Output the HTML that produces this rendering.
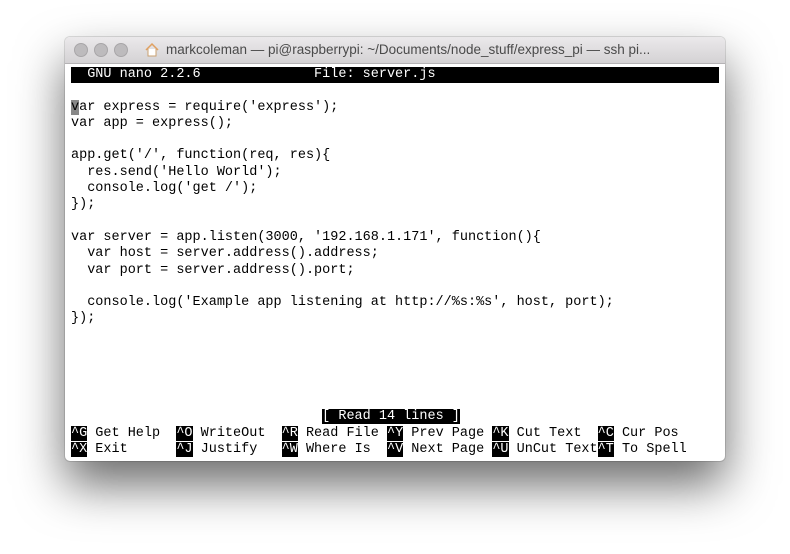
<!DOCTYPE html>
<html><head><style>
html,body{margin:0;padding:0;width:790px;height:554px;background:#fff;overflow:hidden}
.win{position:absolute;left:65px;top:37px;width:660px;height:424px;background:#fff;border-radius:5px;box-shadow:0 24px 48px rgba(0,0,0,.58),0 0 0 1px rgba(0,0,0,.12);overflow:hidden}
.tb{height:26px;background:linear-gradient(#ebe9eb,#d4d2d4);border-bottom:1px solid #b5b3b5;position:relative;font:13.5px "Liberation Sans",sans-serif;color:#4a4a4a}
.dot{position:absolute;top:6px;width:12px;height:12px;border-radius:50%;background:#bdbbbd;border:0.5px solid #a8a6a8}
.title{position:absolute;left:101px;top:5px;white-space:nowrap}
.term{position:absolute;left:6px;top:30px;font:13.5px/16.3px "Liberation Mono",monospace;color:#000;white-space:pre}
.r{height:16.3px;width:648px}
.inv{background:#000;color:#fff}
.k{background:#000;color:#fff}
</style></head><body>
<div class="win">
<div class="tb">
<div class="dot" style="left:9px"></div>
<div class="dot" style="left:29px"></div>
<div class="dot" style="left:49px"></div>
<svg style="position:absolute;left:79px;top:5px" width="16" height="15" viewBox="0 0 16 15"><path d="M2 8 L8 2 L14 8" fill="none" stroke="#e0a060" stroke-width="1.5"/><path d="M4 7 V14 H12 V7" fill="#fff" stroke="#c9a070"/></svg>
<div class="title">markcoleman — pi@raspberrypi: ~/Documents/node_stuff/express_pi — ssh pi...</div>
</div>
<div class="term"><div class="r inv">  GNU nano 2.2.6              File: server.js                                   </div><div class="r"></div><div class="r"><span style="background:#888">v</span>ar express = require('express');</div><div class="r">var app = express();</div><div class="r"></div><div class="r">app.get('/', function(req, res){</div><div class="r">  res.send('Hello World');</div><div class="r">  console.log('get /');</div><div class="r">});</div><div class="r"></div><div class="r">var server = app.listen(3000, '192.168.1.171', function(){</div><div class="r">  var host = server.address().address;</div><div class="r">  var port = server.address().port;</div><div class="r"></div><div class="r">  console.log('Example app listening at http://%s:%s', host, port);</div><div class="r">});</div><div class="r"></div><div class="r"></div><div class="r"></div><div class="r"></div><div class="r"></div><div class="r">                               <span class="inv">[ Read 14 lines ]</span></div><div class="r"><span class="k">^G</span> Get Help  <span class="k">^O</span> WriteOut  <span class="k">^R</span> Read File <span class="k">^Y</span> Prev Page <span class="k">^K</span> Cut Text  <span class="k">^C</span> Cur Pos</div><div class="r"><span class="k">^X</span> Exit      <span class="k">^J</span> Justify   <span class="k">^W</span> Where Is  <span class="k">^V</span> Next Page <span class="k">^U</span> UnCut Text<span class="k">^T</span> To Spell</div></div>
</div>
</body></html>
